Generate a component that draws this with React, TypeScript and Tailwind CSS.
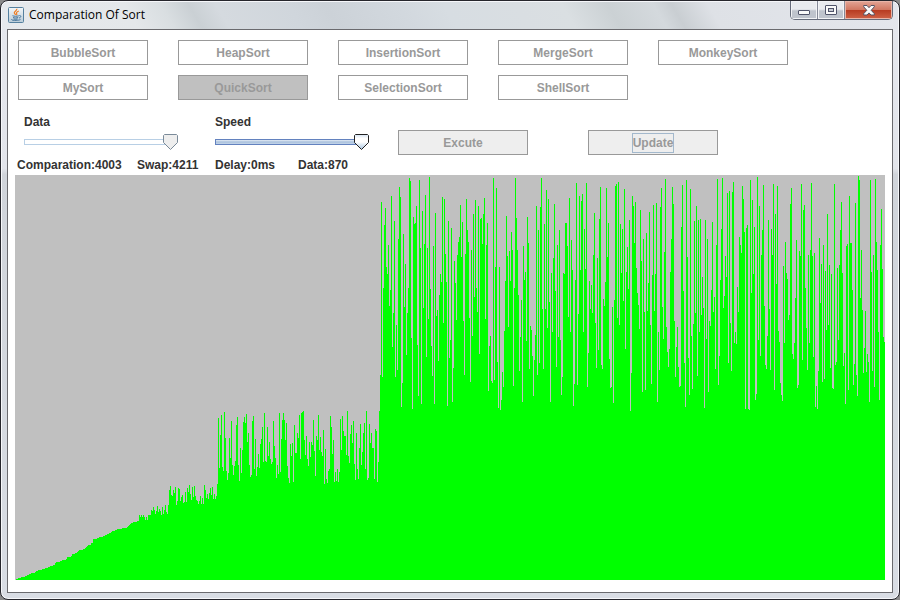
import { useState } from "react";

const ALGORITHMS = [
  "BubbleSort",
  "HeapSort",
  "InsertionSort",
  "MergeSort",
  "MonkeySort",
  "MySort",
  "QuickSort",
  "SelectionSort",
  "ShellSort",
];

const CHART_WIDTH = 870;
const CHART_HEIGHT = 405;

// Already sorted part: [value, how many bars hold it]
const SORTED_RUNS: [number, number][] = [
  [0, 1], [1, 2], [2, 3], [3, 4], [4, 2], [5, 2], [6, 2], [7, 4], [8, 1], [9, 2],
  [10, 4], [11, 3], [12, 3], [13, 2], [14, 3], [15, 2], [17, 1], [18, 4], [19, 2], [20, 4],
  [21, 1], [23, 4], [24, 1], [26, 3], [27, 2], [28, 1], [29, 1], [30, 4], [31, 2], [32, 1],
  [33, 1], [34, 1], [35, 3], [37, 2], [41, 4], [42, 2], [43, 4], [44, 2], [45, 2], [46, 2],
  [47, 2], [48, 1], [49, 3], [50, 2], [51, 5], [52, 5], [53, 1], [54, 1], [55, 1], [56, 1],
  [57, 2], [58, 4], [59, 2],
];

// Partitions still being sorted: each value is ceiling - drop
const PARTITIONS = [
  {
    start: 124,
    ceiling: 100,
    drops: [
      35, 37, 35, 37, 35, 37, 40, 37, 40, 35, 35, 35, 30, 31, 27, 30, 34, 31, 26, 32, 29, 31, 35, 27,
      34, 30, 25, 32, 34, 25, 10, 6, 15, 16, 10, 13, 7, 25, 21, 8, 9, 21, 17, 15, 23, 22, 12, 22, 8,
      12, 5, 14, 20, 7, 17, 6, 16, 20, 21, 24, 21, 16, 24, 18, 24, 5, 10, 18, 14, 19, 13,
    ],
  },
  {
    start: 195,
    ceiling: 180,
    drops: [
      88, 95, 87, 99, 94, 99, 96, 84, 18, 68, 35, 15, 67, 71, 12, 38, 71, 80, 73, 38, 58, 21, 65, 75,
      66, 61, 25, 17, 65, 81, 48, 73, 50, 22, 17, 23, 14, 42, 33, 65, 77, 75, 21, 16, 69, 39, 76, 67,
      54, 68, 44, 39, 27, 62, 13, 61, 62, 27, 56, 42, 59, 64, 62, 21, 46, 58, 78, 65, 74, 13, 72, 39,
      20, 13, 20, 40, 23, 66, 78, 83, 44, 56, 43, 82, 25, 53, 53, 33, 38, 15, 59, 13, 12, 11, 40, 55,
      36, 59, 66, 42, 57, 42, 45, 20, 51, 76, 36, 40, 15, 50, 37, 52, 56, 30, 84, 49, 79, 83, 71, 69,
      16, 27, 54, 40, 82, 72, 81, 69, 82, 72, 19, 50, 16, 31, 36, 36, 55, 11, 56, 63, 34, 25, 43, 21,
      64, 80, 33, 69, 79, 48, 24, 65, 52, 33, 23, 69, 11, 80, 78, 24, 43, 33, 48, 48, 79, 29, 31, 82,
      62,
    ],
  },
  {
    start: 364,
    ceiling: 410,
    drops: [
      241, 205, 32, 207, 118, 55, 38, 97, 104, 75, 136, 120, 26, 177, 143, 51, 207, 155, 200, 69, 17,
      27, 237, 213, 64, 137, 94, 185, 143, 118, 8, 11, 168, 239, 47, 54, 53, 36, 175, 226, 10, 78,
      234, 41, 138, 74, 25, 187, 78, 149, 7, 119, 176, 206, 76, 234, 43, 146, 140, 191, 125, 104, 112,
      27, 153, 29, 84, 112, 236, 51, 188, 170, 58, 232, 198, 91, 113, 150, 85, 72, 67, 35, 87, 52,
      151, 205, 84, 29, 60, 72, 148, 212, 80, 166, 44, 127, 30, 118, 142, 36, 184, 49, 48, 74, 44, 28,
      149, 75, 53, 221, 176, 166, 211, 213, 8, 210, 97, 18, 192, 238, 97, 240, 230, 202, 217, 161,
      111, 46, 86, 157, 81, 111, 62, 80, 216, 118, 8, 48, 80, 125, 201, 167, 130, 232, 76, 110, 102,
      171, 47, 73, 199, 156, 160, 186, 226, 190, 165, 36, 205, 60, 193,
    ],
  },
  {
    start: 525,
    ceiling: 410,
    drops: [
      37, 8, 139, 199, 54, 139, 20, 158, 29, 132, 232, 103, 162, 88, 34, 121, 197, 75, 167, 60, 170,
      225, 207, 103, 104, 53, 53, 76, 147, 28, 162, 70, 100, 236, 214, 110, 13, 215, 144, 26, 100, 31,
      24, 162, 59, 99, 13, 217, 183, 111, 139, 115, 143, 85, 43, 153, 198, 88, 180, 49, 17, 195, 199,
      129, 136, 112, 18, 87, 53, 189, 218, 217, 137, 233, 130, 16, 14, 148, 12, 155, 54, 103, 59, 131,
      19, 179, 102, 77, 119, 50, 241, 203, 26, 36, 73, 32, 98, 123, 135, 159, 40, 91, 222, 69, 142,
      220, 63, 141, 113, 42, 155, 214, 105, 35, 141, 104, 33, 232, 162, 200, 37, 18, 137, 169, 82, 9,
      157, 182, 197, 179, 102, 69, 17, 34, 151, 207, 177, 157, 197, 217, 216, 57, 15, 121, 193, 237,
      10, 87, 188, 225, 19, 166, 219, 154, 51, 143, 36, 206, 50, 162, 49, 145, 107, 138, 238, 50, 169,
      69, 222, 151, 156, 120, 52, 142, 127, 199, 75, 9, 215, 186,
    ],
  },
  {
    start: 705,
    ceiling: 410,
    drops: [
      110, 59, 8, 138, 126, 86, 107, 23, 193, 21, 153, 201, 22, 12, 173, 162, 174, 117, 142, 67, 75,
      83, 16, 29, 62, 239, 58, 55, 239, 240, 10, 123, 30, 104, 57, 230, 224, 7, 170, 36, 186, 85, 60,
      15, 136, 195, 199, 166, 50, 139, 200, 59, 85, 14, 220, 44, 114, 16, 161, 172, 213, 225, 231, 96,
      173, 72, 103, 109, 150, 145, 34, 18, 184, 189, 173, 128, 70, 218, 215, 81, 86, 14, 190, 40, 35,
      118, 158, 200, 85, 173, 80, 13, 86, 187, 83, 237, 216, 239, 201, 68, 133, 94, 212, 75, 209, 101,
      160, 44, 155, 95, 198, 104, 218, 219, 14, 195, 192, 98, 170, 95, 60, 32, 103, 196, 183, 234, 76,
      74, 220, 26, 73, 73, 120, 215, 194, 33, 205, 226, 6, 10, 128, 80, 140, 203, 178, 141, 202, 184,
      192, 232, 10, 102, 201, 85, 217, 9, 72, 100, 162, 230, 75, 39, 99, 167, 172,
    ],
  },
];

function chartPath(): string {
  let d = `M0 ${CHART_HEIGHT}`;
  let x = 0;
  const bar = (value: number) => {
    d += `V${CHART_HEIGHT - value}h1`;
    x += 1;
  };
  SORTED_RUNS.forEach(([value, count]) => {
    for (let i = 0; i < count; i++) bar(value);
  });
  PARTITIONS.forEach((part) => {
    d += `H${part.start}`;
    x = part.start;
    part.drops.forEach((drop) => bar(part.ceiling - drop));
  });
  return `${d}H${x}V${CHART_HEIGHT}Z`;
}

const CHART_PATH = chartPath();

function JavaIcon() {
  return (
    <svg width="16" height="16" viewBox="0 0 16 16" className="shrink-0" aria-hidden="true">
      <defs>
        <linearGradient id="java-bg" x1="0" y1="0" x2="0" y2="1">
          <stop offset="0" stopColor="#f4f7f9" />
          <stop offset="1" stopColor="#b9cbd8" />
        </linearGradient>
      </defs>
      <rect x="0.5" y="0.5" width="15" height="15" rx="1" fill="url(#java-bg)" stroke="#55809f" />
      <path d="M8.8 1.8c.7 1.7-2.600 2.300-2.500 3.900 0 1 1.200 1.400 1.200 2.300M10.800 4c-1.700.7-2.600 1.300-2.300 2.300.2.700.6 1 .1 1.900" fill="none" stroke="#ee7d23" strokeWidth="1.200" />
      <path d="M4.500 8.700c1.500.7 4.500.7 6.300.1M5 10.500c1.500.6 3.600.6 5.200 0M11.300 8.600c2.300-.4 1.900 2-.3 2.400M3.500 12.200c-.7 1.600 7.500 1.600 9 .2M5.500 12c1.200.4 3 .4 4.200 0" fill="none" stroke="#47759b" />
    </svg>
  );
}

function MinimizeIcon() {
  return (
    <svg width="12" height="6" viewBox="0 0 12 6" aria-hidden="true">
      <rect x="0.500" y="0.500" width="11" height="4" rx="0.500" fill="#fafafa" stroke="#50546a" />
    </svg>
  );
}

function MaximizeIcon() {
  return (
    <svg width="12" height="10" viewBox="0 0 12 10" aria-hidden="true">
      <rect x="0.500" y="0.500" width="11" height="9" rx="0.500" fill="#fafafa" stroke="#50546a" />
      <rect x="3.500" y="3.500" width="5" height="3" fill="#c9ccd4" stroke="#50546a" />
    </svg>
  );
}

function CloseIcon() {
  return (
    <svg width="12" height="11" viewBox="0 0 12 11" aria-hidden="true">
      <path
        d="M.7.500h3.300L6 2.700 8 .500h3.300v1.300L8.200 5.300l3.100 3.400v1.300H8L6 7.900 4 10H.7V8.700l3.100-3.400L.7 1.800Z"
        fill="#fafafa"
        stroke="#545363"
      />
    </svg>
  );
}

function Slider({ id, label, disabled = false }: { id: string; label: string; disabled?: boolean }) {
  const [value, setValue] = useState(100);
  return (
    <div className="w-[154px]">
      <label htmlFor={id} className="block leading-4 text-[#333]">
        {label}
      </label>
      <div className="mt-1 grid h-4 items-center">
        <div
          className={
            disabled
              ? "col-start-1 row-start-1 mr-2 h-1.5 border border-[#b8cfe5] bg-white"
              : "col-start-1 row-start-1 mr-2 h-1.5 border border-[#6382bf] bg-linear-to-b from-[#e4ecf5] via-[#a9c0dc] to-[#c5d6ea]"
          }
        />
        <div className="col-start-1 row-start-1 mr-[15px]">
          <svg width="15" height="16" viewBox="0 0 15 16" className="block" style={{ marginLeft: `${value}%` }} aria-hidden="true">
            <defs>
              <linearGradient id="thumb" x1="0" y1="0" x2="0" y2="1">
                <stop offset="0" stopColor="#d4e2f1" />
                <stop offset="0.250" stopColor="#ffffff" />
                <stop offset="0.500" stopColor="#ffffff" />
                <stop offset="0.900" stopColor="#b8cfe5" />
              </linearGradient>
            </defs>
            <path
              d="M1.500.500H13.500L14.500 1.500V8.500L7.500 15.500L.500 8.500V1.500Z"
              fill={disabled ? "#eeeeee" : "url(#thumb)"}
              stroke={disabled ? "#7a8a99" : "#222222"}
            />
          </svg>
        </div>
        <input
          id={id}
          type="range"
          min={0}
          max={100}
          value={value}
          disabled={disabled}
          onChange={(e) => setValue(Number(e.target.value))}
          className="col-start-1 row-start-1 h-4 w-full opacity-0"
        />
      </div>
    </div>
  );
}

export default function App() {
  return (
    <div className="h-screen bg-[#8a8a8a] font-['Liberation_Sans',Arial,sans-serif] text-xs font-bold">
      <div className="flex h-full flex-col rounded-lg border border-[#26262c] bg-[#d9dce3] bg-[linear-gradient(to_bottom,#e6e8ee_0%,#e2e4ea_28%,#d0d4da_29%,#d9dde4_100%)] px-1.5 pb-1.5 shadow-[inset_0_0_0_1px_#f6f7fa]">
        <header className="-mx-[5px] mt-px flex h-[27px] shrink-0 items-start justify-between rounded-t-md bg-[linear-gradient(60deg,#e6e9ed_0%,#e4e7ea_15%,#d9dee1_19%,#cad0d4_22%,#d5dadf_25%,#d0d6dc_33%,#ccd2d8_37%,#d2d8de_45%,#d7dde2_50%,#d9dee2_58%,#dadfe2_63%,#cbd1d4_68%,#d4d9dd_73%,#c9ced2_75%,#dee1e6_79%,#e4e6ec_100%)] pl-1.5">
          <div className="flex items-center gap-[5px] pt-[5px]">
            <JavaIcon />
            <h1 className="font-['Open_Sans','Noto_Sans',sans-serif] text-[12px] leading-4 font-normal text-black">
              Comparation Of Sort
            </h1>
          </div>
          <div className="mr-[5px] -mt-px flex h-[19px] overflow-hidden rounded-b-[5px] border border-t-0 border-[#656b7a]">
            <button type="button" aria-label="Minimize" className="flex w-[27px] items-center justify-center border-r border-[#858a98] bg-linear-to-b from-[#e9ebef] from-45% to-[#bfc4cd] to-55% pt-1.5 shadow-[inset_0_0_0_1px_#f2f3f6]">
              <MinimizeIcon />
            </button>
            <button type="button" aria-label="Maximize" className="flex w-[27px] items-center justify-center border-r border-[#858a98] bg-linear-to-b from-[#e9ebef] from-45% to-[#bfc4cd] to-55% shadow-[inset_0_0_0_1px_#f2f3f6]">
              <MaximizeIcon />
            </button>
            <button type="button" aria-label="Close" className="flex w-[47px] items-center justify-center bg-[linear-gradient(to_bottom,#e3a596_0%,#d17862_48%,#b83c22_52%,#cf6347_100%)] shadow-[inset_0_0_0_1px_#e9b5a8]">
              <CloseIcon />
            </button>
          </div>
        </header>

        <main className="flex min-h-0 flex-1 flex-col border border-[#6a6a6e] bg-white px-[7px] pb-3">
          <div className="flex flex-wrap gap-x-[30px] gap-y-2.5 px-[3px] pt-2.5">
            {ALGORITHMS.map((name) => (
              <button
                key={name}
                type="button"
                disabled
                className={
                  name === "QuickSort"
                    ? "h-[25px] w-[130px] border border-[#999] bg-[#c0c0c0] text-[#999]"
                    : "h-[25px] w-[130px] border border-[#999] bg-white text-[#999]"
                }
              >
                {name}
              </button>
            ))}
          </div>

          <div className="mt-3.5 flex items-start pl-[9px]">
            <div className="flex gap-[37px]">
              <Slider id="data" label="Data" disabled />
              <Slider id="speed" label="Speed" />
            </div>
            <div className="mt-4 ml-[29px] flex gap-[60px]">
              <button type="button" disabled className="h-[25px] w-[130px] border border-[#999] bg-[#eee] text-[#999]">
                Excute
              </button>
              <button type="button" disabled className="flex h-[25px] w-[130px] items-center justify-center border border-[#999] bg-[#eee] text-[#999]">
                <span className="border border-[#a3b8cc] leading-[18px]">Update</span>
              </button>
            </div>
          </div>

          <div className="my-0.5 grid grid-cols-[120px_78px_83px_auto] pl-0.5 leading-4 text-[#333]">
            <span>Comparation:4003</span>
            <span>Swap:4211</span>
            <span>Delay:0ms</span>
            <span>Data:870</span>
          </div>

          <div className="min-h-0 flex-1 bg-[#c0c0c0]">
            <svg
              viewBox={`0 0 ${CHART_WIDTH} ${CHART_HEIGHT}`}
              preserveAspectRatio="none"
              shapeRendering="crispEdges"
              className="block h-full w-full"
              role="img"
              aria-label="Data"
            >
              <path d={CHART_PATH} fill="#00ff00" />
            </svg>
          </div>
        </main>
      </div>
    </div>
  );
}
